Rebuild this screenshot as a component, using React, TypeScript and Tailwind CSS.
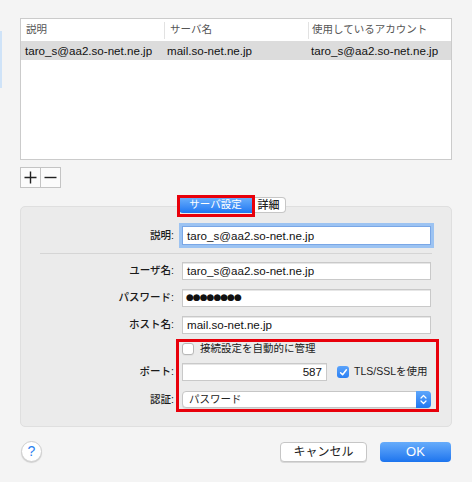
import React from "react";

const font = {
  fontFamily: '"Liberation Sans", "Noto Sans CJK JP", sans-serif',
};

function Field({ label, children, className = "" }: { label: string; children: React.ReactNode; className?: string }) {
  return (
    <div className={`flex items-center ${className}`}>
      <div className="w-[153px] text-right text-[10.5px] font-medium text-[#1a1a1a]">{label}</div>
      <div className="ml-[8px]">{children}</div>
    </div>
  );
}

function TextBox({ value, focused = false }: { value: string; focused?: boolean }) {
  return (
    <div
      className={`flex h-[18px] w-[249px] items-center bg-white pl-[4px] text-[11.6px] text-[#111] ${
        focused
          ? "h-[19px] border border-[#7aa7e6] shadow-[0_0_0_3px_#9cc3f2]"
          : "border border-[#c9c9c9] shadow-[inset_0_1px_0_#e6e6e6]"
      }`}
    >
      {value}
    </div>
  );
}

function Check({ checked = false }: { checked?: boolean }) {
  if (checked) {
    return (
      <div className="flex h-[12px] w-[12px] items-center justify-center rounded-[3px] bg-gradient-to-b from-[#5aa3fb] to-[#2a7ff3]">
        <svg width="9" height="9" viewBox="0 0 9 9">
          <path d="M1.6 4.8 L3.6 6.8 L7.4 1.8" fill="none" stroke="white" strokeWidth="1.5" strokeLinecap="round" strokeLinejoin="round" />
        </svg>
      </div>
    );
  }
  return <div className="h-[12px] w-[12px] rounded-[3px] border border-[#b8b8b8] bg-white shadow-[0_1px_0_#e2e2e2]" />;
}

export default function App() {
  return (
    <div className="flex h-[482px] w-[472px] overflow-hidden bg-[#f4f4f4]" style={font}>
      {/* sidebar selection edge */}
      <div className="mt-[31px] h-[57px] w-[2px] bg-[#cfe3f8]" />

      <div className="ml-[18px] flex w-[432px] flex-col pt-[18px]">
        {/* Accounts table */}
        <div className="h-[142px] border border-[#cbcbcb] bg-white">
          <div className="grid h-[22px] grid-cols-[143px_144px_1fr] items-center text-[10.5px] text-[#555]">
            <div className="pl-[5px]">説明</div>
            <div className="flex h-[17px] items-center border-l border-[#e2e2e2] pl-[5px]">サーバ名</div>
            <div className="flex h-[17px] items-center border-l border-[#e2e2e2] pl-[3px]">使用しているアカウント</div>
          </div>
          <div className="grid h-[19px] grid-cols-[143px_144px_1fr] items-center bg-[#dcdcdc] text-[11.6px] text-[#111]">
            <div className="pl-[4px]">taro_s@aa2.so-net.ne.jp</div>
            <div className="pl-[3px]">mail.so-net.ne.jp</div>
            <div className="pl-[3px]">taro_s@aa2.so-net.ne.jp</div>
          </div>
        </div>

        {/* + / - */}
        <div className="mt-[7px] flex">
          <div className="flex h-[21px] w-[21px] items-center justify-center border border-[#c4c4c4] bg-[#fbfbfb]">
            <svg width="13" height="13" viewBox="0 0 13 13">
              <path d="M6.5 0.5 V12.5 M0.5 6.5 H12.5" stroke="#222" strokeWidth="1.4" />
            </svg>
          </div>
          <div className="flex h-[21px] w-[20px] items-center justify-center border border-l-0 border-[#c4c4c4] bg-[#fbfbfb]">
            <svg width="13" height="13" viewBox="0 0 13 13">
              <path d="M0.5 6.5 H12.5" stroke="#222" strokeWidth="1.4" />
            </svg>
          </div>
        </div>

        {/* Tabs */}
        <div className="relative z-10 mt-[9px] flex pl-[159px]">
          <div className="relative flex h-[16px]">
            <div className="flex w-[73px] items-center justify-center rounded-l-[4px] bg-gradient-to-b from-[#6cb0fb] to-[#1c77f2] text-[10.5px] text-white">
              サーバ設定
            </div>
            <div className="flex w-[34px] items-center justify-center rounded-r-[4px] border border-l-0 border-[#c6c6c6] bg-white text-[11px] font-medium text-[#222]">
              詳細
            </div>
            <div className="absolute left-[-2px] top-[-2px] h-[22px] w-[78px] border-[3px] border-[#e8000b]" />
          </div>
        </div>

        {/* Settings panel */}
        <div className="relative -mt-[7px] rounded-[5px] border border-[#dfdfdf] bg-[#ebebeb] pb-[18px] pt-[19px]">
          <Field label="説明:">
            <TextBox value="taro_s@aa2.so-net.ne.jp" focused />
          </Field>

          <div className="mx-[19px] mt-[8px] h-px bg-[#d5d5d5]" />

          <Field label="ユーザ名:" className="mt-[8px]">
            <TextBox value="taro_s@aa2.so-net.ne.jp" />
          </Field>
          <Field label="パスワード:" className="mt-[9px]">
            <div className="flex h-[18px] w-[249px] items-center border border-[#c9c9c9] bg-white pl-[3px] text-[9px] tracking-[-1px] text-[#111] shadow-[inset_0_1px_0_#e6e6e6]" style={{ fontFamily: '"DejaVu Sans", sans-serif' }}>
              ●●●●●●●●
            </div>
          </Field>
          <Field label="ホスト名:" className="mt-[9px]">
            <TextBox value="mail.so-net.ne.jp" />
          </Field>

          <div className="mt-[9px] flex h-[12px] items-center pl-[161px]">
            <Check />
            <span className="ml-[6px] text-[10.5px] text-[#222]">接続設定を自動的に管理</span>
          </div>

          <Field label="ポート:" className="mt-[8px]">
            <div className="flex items-center">
              <div className="flex h-[18px] w-[145px] items-center justify-end border border-[#c9c9c9] bg-white pr-[4px] text-[11.6px] text-[#111] shadow-[inset_0_1px_0_#e6e6e6]">
                587
              </div>
              <div className="ml-[10px]">
                <Check checked />
              </div>
              <span className="ml-[5px] text-[10.5px] text-[#222]">TLS/SSLを使用</span>
            </div>
          </Field>

          <Field label="認証:" className="mt-[10px]">
            <div className="flex h-[17px] w-[249px] items-center rounded-[4px] border border-[#c6c6c6] bg-white shadow-[0_1px_0_#dadada]">
              <span className="flex-1 pl-[6px] text-[10.5px] text-[#222]">パスワード</span>
              <div className="flex h-[17px] w-[15px] -mr-px items-center justify-center rounded-r-[4px] bg-gradient-to-b from-[#5da6fb] to-[#1f78f1]">
                <svg width="7" height="11" viewBox="0 0 7 11">
                  <path d="M1 4 L3.5 1.5 L6 4 M1 7 L3.5 9.5 L6 7" fill="none" stroke="white" strokeWidth="1.2" strokeLinecap="round" strokeLinejoin="round" />
                </svg>
              </div>
            </div>
          </Field>

          {/* annotation box */}
          <div className="absolute left-[155px] top-[132px] h-[73px] w-[263px] border-[3px] border-[#e8000b]" />
        </div>

        {/* Footer */}
        <div className="mt-[14px] flex items-center justify-between">
          <div className="ml-[1px] flex h-[21px] w-[21px] items-center justify-center rounded-full border border-[#cfcfcf] bg-white text-[14px] text-[#2a7ff0] shadow-[0_1px_1px_#d0d0d0]">
            ?
          </div>
          <div className="mr-[1px] flex gap-[13px]">
            <div className="flex h-[20px] w-[87px] items-center justify-center rounded-[4px] border border-[#c6c6c6] bg-white text-[12px] text-[#222] shadow-[0_1px_0_#d8d8d8]">
              キャンセル
            </div>
            <div className="flex h-[20px] w-[71px] items-center justify-center rounded-[4px] bg-gradient-to-b from-[#66acfb] to-[#1b74ee] text-[13px] text-white">
              OK
            </div>
          </div>
        </div>
      </div>
    </div>
  );
}
